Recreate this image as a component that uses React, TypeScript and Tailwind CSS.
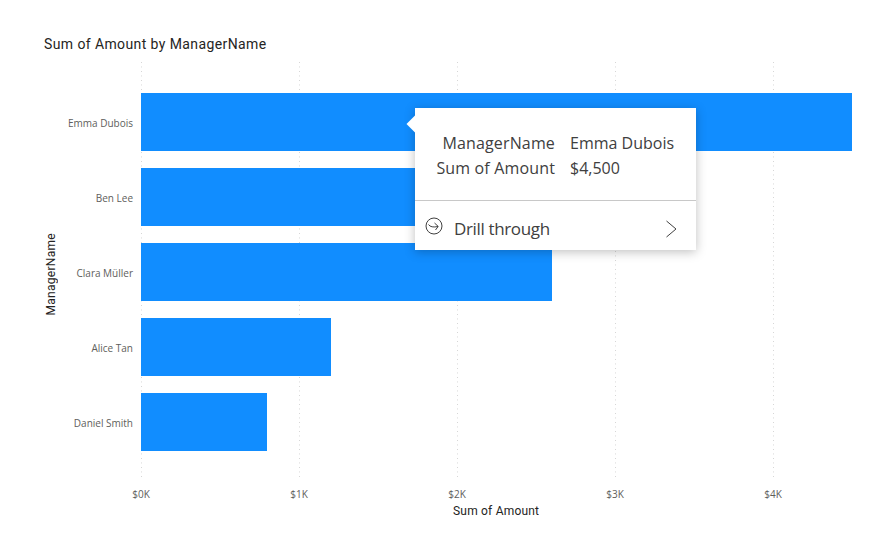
import React from 'react';

const managers = [
  { name: 'Emma Dubois', amount: 4500 },
  { name: 'Ben Lee', amount: 3000 },
  { name: 'Clara Müller', amount: 2600 },
  { name: 'Alice Tan', amount: 1200 },
  { name: 'Daniel Smith', amount: 800 },
];

const ticks = ['$0K', '$1K', '$2K', '$3K', '$4K'];
const pxPerDollar = 0.158;

const Tooltip: React.FC = () => (
  <div className="absolute left-[274px] top-[46px] w-[281px] h-[142px] bg-white shadow-[0_2px_10px_rgba(0,0,0,0.25)] font-['Open_Sans',sans-serif] text-[#404040]">
    <div className="absolute left-[-6px] top-[10px] w-[12px] h-[12px] rotate-45 bg-white" />
    <div className="relative h-[93px] pt-[23px] pl-[20px] flex gap-[15px] text-[16px] leading-[25px] border-b border-[#c8c8c8]">
      <div className="w-[120px] text-right whitespace-nowrap tracking-[0.15px]">
        <div>ManagerName</div>
        <div>Sum of Amount</div>
      </div>
      <div>
        <div>Emma Dubois</div>
        <div>$4,500</div>
      </div>
    </div>
    <div className="flex items-center h-[49px] pt-[6px] pl-[10px] pr-[18px] text-[17px]">
      <svg width="18" height="18" viewBox="0 0 18 18" fill="none" stroke="#404040" strokeWidth="1" className="mb-[6px]">
        <circle cx="9" cy="9" r="8" />
        <path d="M3.5 7.5 C5 10 8.5 10.5 13 9.5 M9.5 6 L13.2 9.4 L10.5 13" />
      </svg>
      <span className="ml-[11px] tracking-[-0.35px]">Drill through</span>
      <svg width="13" height="18" viewBox="0 0 13 18" fill="none" stroke="#404040" strokeWidth="1" className="ml-auto">
        <path d="M1.5 1 L11 9 L1.5 17" />
      </svg>
    </div>
  </div>
);

export default function App() {
  return (
    <div className="w-[890px] h-[554px] bg-white overflow-hidden pt-[35px] pl-[44px] font-['Open_Sans',sans-serif]">
      <h1 className="h-[27px] text-[14px] leading-[18px] font-normal text-[#252423] font-['Roboto',sans-serif] tracking-[0.4px]">
        Sum of Amount by ManagerName
      </h1>

      <div className="flex">
        {/* axis title */}
        <div className="w-[13px] h-[424px] shrink-0 flex items-center justify-center">
          <span className="[writing-mode:vertical-rl] rotate-180 whitespace-nowrap text-[12px] text-[#252423] font-['Roboto',sans-serif] tracking-[0.3px]">
            ManagerName
          </span>
        </div>

        {/* category labels */}
        <div className="w-[76px] shrink-0 pt-[32px] flex flex-col gap-[17px] text-[10px] text-[#605e5c] text-right">
          {managers.map((m) => (
            <div key={m.name} className="h-[58px] whitespace-nowrap flex items-center justify-end">{m.name}</div>
          ))}
        </div>

        <div className="ml-[8px] w-[711px] shrink-0">
          {/* plot area */}
          <div className="relative h-[418px]">
            <div className="absolute inset-0 flex">
              {ticks.map((t) => (
                <div key={t} className="w-[158px] h-full shrink-0">
                  <div className="w-px h-full bg-[linear-gradient(#d4d4d4_1px,transparent_1px)] bg-[length:1px_4.5px]" />
                </div>
              ))}
            </div>
            <div className="relative pt-[31px] flex flex-col gap-[17px]">
              {managers.map((m) => (
                <div key={m.name} className="h-[58px] bg-[#118dff]" style={{ width: m.amount * pxPerDollar }} />
              ))}
            </div>
            <Tooltip />
          </div>

          {/* value axis */}
          <div className="flex h-[16px] mt-[6px] text-[10px] leading-[16px] text-[#605e5c]">
            {ticks.map((t) => (
              <div key={t} className="w-[158px] shrink-0">
                <div className="w-0 flex justify-center">
                  <span>{t}</span>
                </div>
              </div>
            ))}
          </div>
          <div className="pl-[312px] mt-[1px] text-[12px] leading-[16px] text-[#252423] font-['Roboto',sans-serif] tracking-[0.2px]">
            Sum of Amount
          </div>
        </div>
      </div>
    </div>
  );
}
